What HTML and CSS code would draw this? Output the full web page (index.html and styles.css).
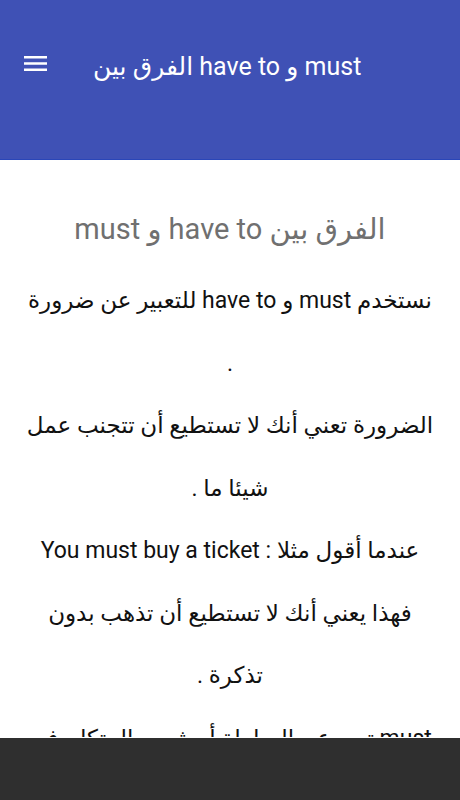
FILE: index.html
```html
<!DOCTYPE html>
<html lang="ar">
<head>
  <meta charset="UTF-8" />
  <title>الفرق بين have to و must</title>
  <link rel="stylesheet" href="styles.css">
</head>
<body>
  <header class="toolbar">
    <div class="toolbar-row">
      <button class="menu-btn" aria-label="menu">
        <svg width="24" height="24" viewBox="0 0 24 24">
          <path d="M0 2h23v2.6H0zM0 8.2h23v2.6H0zM0 14.4h23v2.6H0z" fill="#fff"/>
        </svg>
      </button>
      <span class="toolbar-title" dir="ltr">الفرق بين have to و must</span>
    </div>
  </header>

  <main class="content" dir="rtl">
    <h1 class="lesson-title">الفرق بين have to و must</h1>
    <p>نستخدم must و have to للتعبير عن ضرورة .</p>
    <p>الضرورة تعني أنك لا تستطيع أن تتجنب عمل شيئا ما .</p>
    <p>عندما أقول مثلا : You must buy a ticket</p>
    <p>فهذا يعني أنك لا تستطيع أن تذهب بدون تذكرة .</p>
    <p>must تعبر عن السلطة أو شعور المتكلم في هذه الحالة .</p>
  </main>

  <div class="navbar"></div>
</body>
</html>
```

FILE: styles.css
```css
body {
  margin: 0;
  font-family: Roboto, "DejaVu Sans", sans-serif;
  background: #fff;
}
.toolbar {
  height: 160px;
  background: #3f51b5;
  border-bottom: 1px solid #2a46b8;
  box-sizing: border-box;
}
.toolbar-row {
  display: flex;
  align-items: center;
  height: 56px;
  padding-top: 38px;
}
.menu-btn {
  background: none;
  border: 0;
  padding: 0;
  margin-left: 24px;
  width: 24px;
  height: 24px;
  display: flex;
}
.toolbar-title {
  color: #fff;
  font-size: 25px;
  margin-left: 45px;
}
.content {
  padding: 0 25px;
  height: 577px;
  overflow: hidden;
  text-align: center;
}
.lesson-title {
  font-weight: normal;
  font-size: 29px;
  color: #707070;
  margin: 52px 0 24px;
}
.content p {
  margin: 0;
  font-size: 23px;
  line-height: 62.5px;
  color: #111;
}
.navbar {
  position: fixed;
  left: 0;
  right: 0;
  bottom: 0;
  height: 62px;
  background: #2f2f2f;
}
```
